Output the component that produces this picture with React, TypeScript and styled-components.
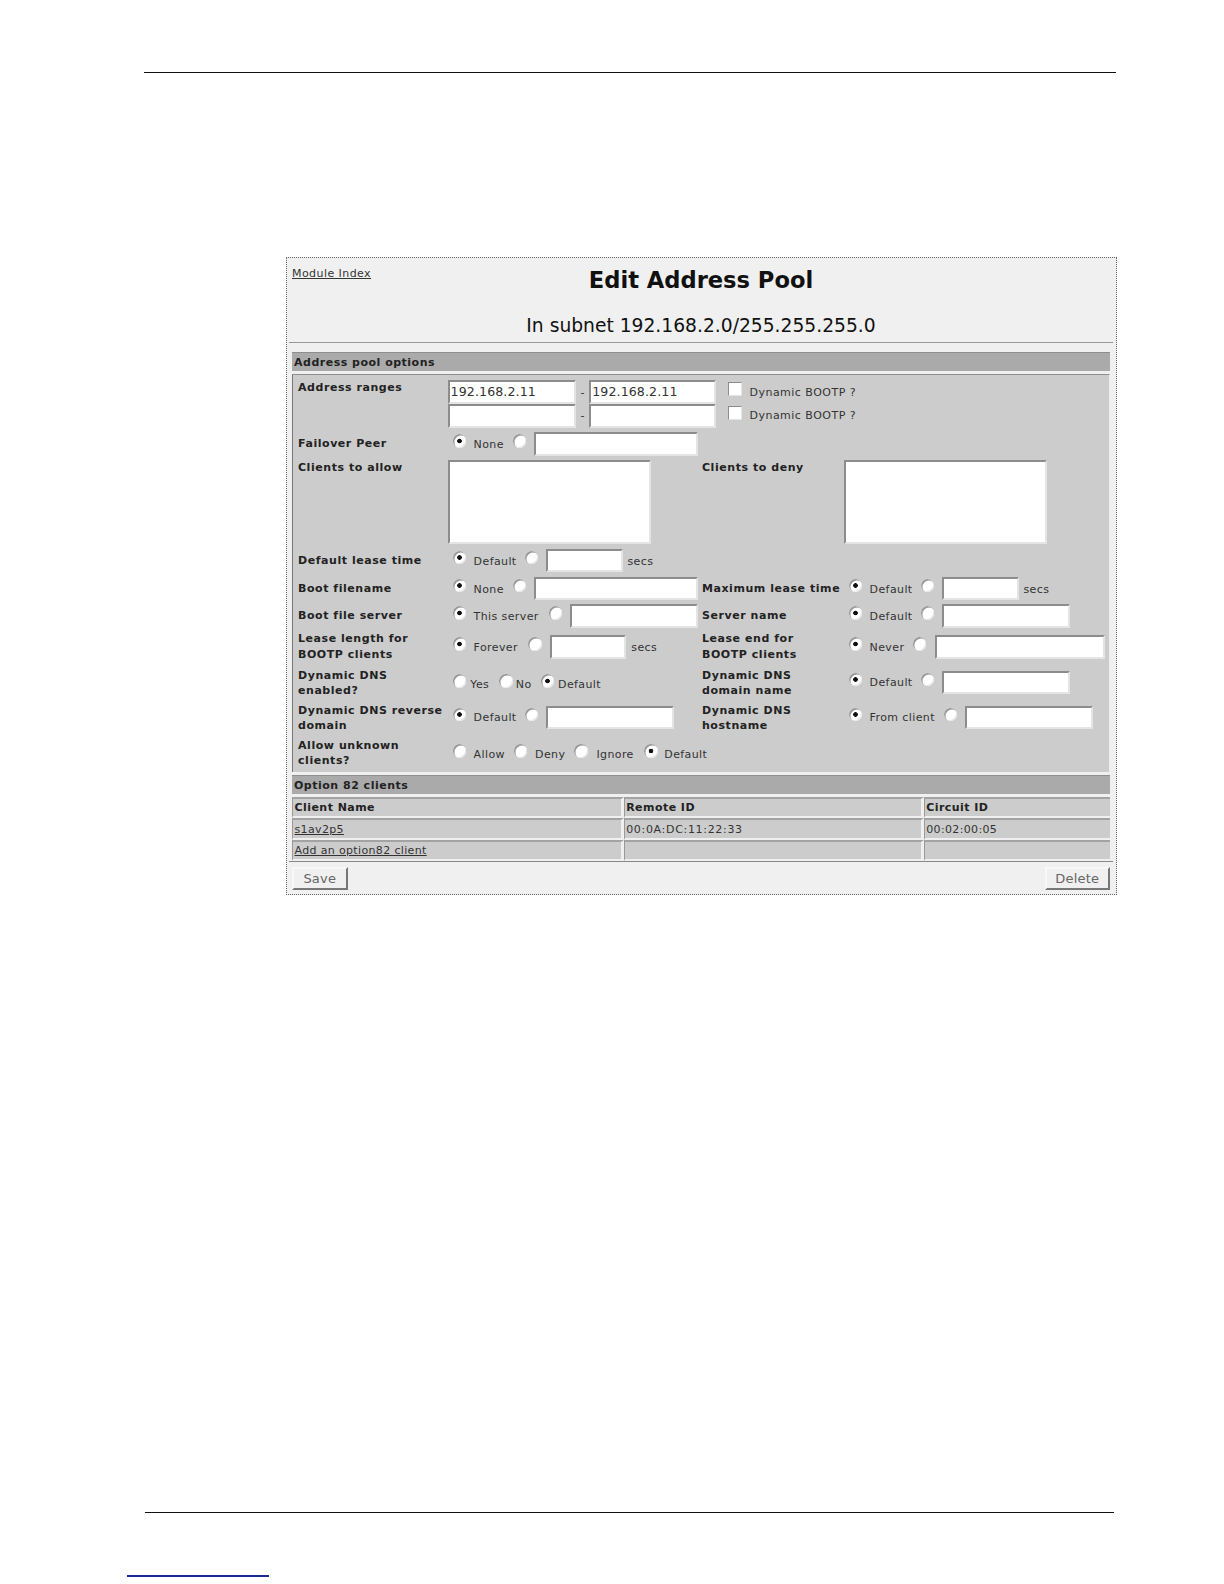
import React from "react";
import styled, { createGlobalStyle } from "styled-components";

const Global = createGlobalStyle`
  html, body { margin: 0; padding: 0; background: #fff; }
  body { font-family: "DejaVu Sans", "Liberation Sans", sans-serif; color: #222; }
`;

const Page = styled.div`
  width: 1224px;
  height: 1584px;
  padding-top: 72px;
  box-sizing: border-box;
  overflow: hidden;
`;
const TopRule = styled.div`
  height: 1px;
  width: 972px;
  margin-left: 144px;
  background: #111;
`;
const Panel = styled.div`
  box-sizing: border-box;
  width: 831px;
  height: 638px;
  margin: 184px 0 0 286px;
  padding: 1px 3px 0 2px;
  border: 1px dotted #666;
  background: #f0f0f0;
`;
const Head = styled.div`
  display: grid;
  grid-template-columns: 1fr auto 1fr;
  height: 55px;
`;
const ModuleLink = styled.a`
  font-size: 11px;
  line-height: 14px;
  margin: 8px 0 0 3px;
  color: #333;
  text-decoration: underline;
  letter-spacing: 0.44px;
`;
const Title = styled.h1`
  margin: 7px 0 0;
  font-size: 22.6px;
  line-height: 28px;
  font-weight: 700;
  color: #111;
`;
const Subtitle = styled.h2`
  margin: 0;
  font-size: 18.7px;
  line-height: 24px;
  font-weight: 400;
  text-align: center;
  color: #111;
`;
const Divider = styled.div`
  height: 1px;
  margin-top: 4px;
  background: #999;
`;
const Content = styled.div`
  width: 818px;
  margin: 9px 0 0 3px;
`;
const SectionBar = styled.div`
  box-sizing: border-box;
  height: 19px;
  padding: 2px 0 0 2px;
  background: #aaa;
  border-top: 1px solid #8e8e8e;
  font-size: 11px;
  line-height: 16px;
  font-weight: 700;
  letter-spacing: 0.5px;
  color: #222;
`;
const ClientsBar = styled(SectionBar)`
  margin: 3px 0 2.5px;
`;
const Options = styled.div`
  box-sizing: border-box;
  height: 398px;
  margin-top: 3px;
  padding: 5.3px 0 0 5px;
  background: #ccc;
  border-top: 1px solid #8e8e8e;
  border-left: 1px solid #777;
  border-right: 1px solid #eee;
`;
const Row = styled.div<{ $h: number; $gap?: number }>`
  display: grid;
  grid-template-columns: 149.6px 254.4px 141.6px 1fr;
  align-items: center;
  height: ${(p) => p.$h}px;
  margin-bottom: ${(p) => p.$gap ?? 5}px;
`;
const TopRow = styled(Row)`
  align-items: start;
`;
const Label = styled.div`
  font-size: 11px;
  line-height: 15.5px;
  font-weight: 700;
  letter-spacing: 0.55px;
  color: #222;
  white-space: nowrap;
`;
const LowLabel = styled(Label)`
  padding-top: 2px;
`;
const Controls = styled.div`
  display: flex;
  align-items: center;
  height: 100%;
  white-space: nowrap;
`;
const LowControls = styled(Controls)`
  padding-top: 3px;
  box-sizing: border-box;
`;
const Stack = styled.div`
  display: flex;
  flex-direction: column;
  grid-column: 2 / 5;
`;
const Line = styled.div`
  display: flex;
  align-items: center;
  height: 23.75px;
`;
const Text = styled.span<{ $l?: number }>`
  font-size: 11px;
  line-height: 14px;
  color: #333;
  letter-spacing: 0.4px;
  margin-left: ${(p) => p.$l ?? 7.5}px;
  position: relative;
  top: 1px;
`;
const Radio = styled.input.attrs({ type: "radio", readOnly: true })<{ $l?: number }>`
  appearance: none;
  box-sizing: border-box;
  flex: none;
  width: 13.5px;
  height: 13.5px;
  margin: 0 0 0 ${(p) => p.$l ?? 5}px;
  position: relative;
  top: -3px;
  border-radius: 50%;
  background: #fff;
  box-shadow: inset 1.5px 1.5px 0 #9a9a9a, inset -1px -1px 0 #e8e8e8;
  &:checked {
    background: radial-gradient(circle at 50% 50%, #111 0 2px, #fff 2.6px);
  }
`;
const Field = styled.input.attrs({ type: "text", readOnly: true })<{ $w: number; $l?: number }>`
  box-sizing: border-box;
  flex: none;
  width: ${(p) => p.$w}px;
  height: 23.5px;
  margin: 0 0 0 ${(p) => p.$l ?? 8}px;
  padding: 0 1px 2px;
  border-style: solid;
  border-width: 2px;
  border-color: #8c8c8c #e4e4e4 #e4e4e4 #8c8c8c;
  background: #fff;
  font: 12.6px "DejaVu Sans", sans-serif;
  letter-spacing: 0.1px;
  color: #333;
`;
const Area = styled.textarea.attrs({ readOnly: true })`
  box-sizing: border-box;
  display: block;
  width: 203px;
  height: 84px;
  margin: 0;
  border-style: solid;
  border-width: 2px;
  border-color: #8c8c8c #e4e4e4 #e4e4e4 #8c8c8c;
  background: #fff;
  resize: none;
`;
const Check = styled.input.attrs({ type: "checkbox", readOnly: true })`
  appearance: none;
  box-sizing: border-box;
  flex: none;
  width: 14px;
  height: 14px;
  margin: 0 0 0 12.3px;
  position: relative;
  top: -3px;
  background: #fff;
  border-style: solid;
  border-width: 1.5px;
  border-color: #8c8c8c #e4e4e4 #e4e4e4 #8c8c8c;
`;
const CheckLabel = styled(Text)`
  letter-spacing: 0.48px;
  top: 0.5px;
`;
const Dash = styled.span`
  width: 13.6px;
  text-align: center;
  font-size: 11px;
  color: #333;
`;
const ClientTable = styled.table`
  width: 818px;
  table-layout: fixed;
  border-collapse: separate;
  border-spacing: 0;
`;
const Cell = styled.td<{ $w?: number }>`
  box-sizing: border-box;
  ${(p) => (p.$w ? `width: ${p.$w}px;` : "")}
  height: 21.5px;
  padding: 2px 0 0 1.5px;
  background: #ccc;
  background-clip: padding-box;
  border-top: 2px solid #a3a3a3;
  border-left: 1px solid #999;
  border-bottom: 2.5px solid #f0f0f0;
  font-size: 11px;
  line-height: 14px;
  letter-spacing: 0.35px;
  color: #333;
  &:not(:last-child) {
    border-right: 3px solid #f0f0f0;
  }
`;
const HeadCell = styled(Cell).attrs({ as: "th" })`
  text-align: left;
  font-weight: 700;
  letter-spacing: 0.45px;
  color: #222;
`;
const CellLink = styled.a`
  color: #333;
  text-decoration: underline;
`;
const WideValue = styled.span`
  letter-spacing: 0.68px;
`;
const TableRule = styled.div`
  height: 1px;
  margin: 0 -3px;
  background: #888;
`;
const Buttons = styled.div`
  display: flex;
  justify-content: space-between;
  margin-top: 4.5px;
`;
const Button = styled.button<{ $w: number }>`
  box-sizing: border-box;
  width: ${(p) => p.$w}px;
  height: 23px;
  padding: 0;
  border-style: solid;
  border-width: 2px;
  border-color: #f8f8f8 #777 #777 #f8f8f8;
  background: #f0f0f0;
  font: 13px "DejaVu Sans", sans-serif;
  color: #666;
  letter-spacing: 0.2px;
`;
const BottomRule = styled.div`
  height: 1px;
  width: 969px;
  margin: 617px 0 0 145px;
  background: #111;
`;
const LinkRule = styled.div`
  height: 1.5px;
  width: 142px;
  margin: 62px 0 0 127px;
  background: #1a2a9c;
`;

export default function App() {
  return (
    <Page>
      <Global />
      <TopRule />
      <Panel>
        <Head>
          <ModuleLink href="#">Module Index</ModuleLink>
          <Title>Edit Address Pool</Title>
          <span />
        </Head>
        <Subtitle>In subnet 192.168.2.0/255.255.255.0</Subtitle>
        <Divider />
        <Content>
          <SectionBar>Address pool options</SectionBar>
          <Options>
            <TopRow $h={47.5} $gap={4.5}>
              <Label>Address ranges</Label>
              <Stack>
                <Line>
                  <Field $w={128} $l={0} defaultValue="192.168.2.11" />
                  <Dash>-</Dash>
                  <Field $w={127} $l={0} defaultValue="192.168.2.11" />
                  <Check />
                  <CheckLabel $l={7}>Dynamic BOOTP ?</CheckLabel>
                </Line>
                <Line>
                  <Field $w={128} $l={0} />
                  <Dash>-</Dash>
                  <Field $w={127} $l={0} />
                  <Check />
                  <CheckLabel $l={7}>Dynamic BOOTP ?</CheckLabel>
                </Line>
              </Stack>
            </TopRow>
            <Row $h={23.5} $gap={4}>
              <Label>Failover Peer</Label>
              <Controls>
                <Radio defaultChecked name="peer" />
                <Text>None</Text>
                <Radio $l={9} name="peer" />
                <Field $w={164} $l={7.5} />
              </Controls>
            </Row>
            <TopRow $h={84}>
              <Label>Clients to allow</Label>
              <Area />
              <Label>Clients to deny</Label>
              <Area />
            </TopRow>
            <Row $h={23}>
              <Label>Default lease time</Label>
              <Controls>
                <Radio defaultChecked name="dl" />
                <Text>Default</Text>
                <Radio $l={8} name="dl" />
                <Field $w={77} />
                <Text $l={4.4}>secs</Text>
              </Controls>
            </Row>
            <Row $h={23} $gap={4.5}>
              <Label>Boot filename</Label>
              <Controls>
                <Radio defaultChecked name="bf" />
                <Text>None</Text>
                <Radio $l={9} name="bf" />
                <Field $w={164} $l={7.5} />
              </Controls>
              <Label>Maximum lease time</Label>
              <Controls>
                <Radio defaultChecked name="ml" />
                <Text>Default</Text>
                <Radio $l={8} name="ml" />
                <Field $w={77} />
                <Text $l={4.4}>secs</Text>
              </Controls>
            </Row>
            <Row $h={23} $gap={4}>
              <Label>Boot file server</Label>
              <Controls>
                <Radio defaultChecked name="bs" />
                <Text>This server</Text>
                <Radio $l={10} name="bs" />
                <Field $w={128} />
              </Controls>
              <Label>Server name</Label>
              <Controls>
                <Radio defaultChecked name="sn" />
                <Text>Default</Text>
                <Radio $l={8} name="sn" />
                <Field $w={128} />
              </Controls>
            </Row>
            <Row $h={28} $gap={6.5}>
              <Label>Lease length for<br />BOOTP clients</Label>
              <Controls>
                <Radio defaultChecked name="ll" />
                <Text>Forever</Text>
                <Radio $l={10.5} name="ll" />
                <Field $w={76} />
                <Text $l={5.4}>secs</Text>
              </Controls>
              <Label>Lease end for<br />BOOTP clients</Label>
              <Controls>
                <Radio defaultChecked name="le" />
                <Text>Never</Text>
                <Radio $l={8.3} name="le" />
                <Field $w={170} $l={9} />
              </Controls>
            </Row>
            <Row $h={30}>
              <LowLabel>Dynamic DNS<br />enabled?</LowLabel>
              <LowControls>
                <Radio name="de" />
                <Text $l={4.2}>Yes</Text>
                <Radio $l={10} name="de" />
                <Text $l={3}>No</Text>
                <Radio $l={9} defaultChecked name="de" />
                <Text $l={4}>Default</Text>
              </LowControls>
              <LowLabel>Dynamic DNS<br />domain name</LowLabel>
              <Controls>
                <Radio defaultChecked name="dd" />
                <Text>Default</Text>
                <Radio $l={8} name="dd" />
                <Field $w={128} />
              </Controls>
            </Row>
            <Row $h={30}>
              <LowLabel>Dynamic DNS reverse<br />domain</LowLabel>
              <Controls>
                <Radio defaultChecked name="dr" />
                <Text>Default</Text>
                <Radio $l={8} name="dr" />
                <Field $w={128} />
              </Controls>
              <LowLabel>Dynamic DNS<br />hostname</LowLabel>
              <Controls>
                <Radio defaultChecked name="dh" />
                <Text>From client</Text>
                <Radio $l={9} name="dh" />
                <Field $w={128} />
              </Controls>
            </Row>
            <Row $h={30} $gap={0}>
              <LowLabel>Allow unknown<br />clients?</LowLabel>
              <LowControls>
                <Radio name="au" />
                <Text>Allow</Text>
                <Radio $l={8.6} name="au" />
                <Text $l={8}>Deny</Text>
                <Radio $l={9} name="au" />
                <Text $l={8.5}>Ignore</Text>
                <Radio $l={10.5} defaultChecked name="au" />
                <Text $l={6.5}>Default</Text>
              </LowControls>
            </Row>
          </Options>
          <ClientsBar>Option 82 clients</ClientsBar>
          <ClientTable>
            <thead>
              <tr>
                <HeadCell $w={331.7}>Client Name</HeadCell>
                <HeadCell $w={300}>Remote ID</HeadCell>
                <HeadCell>Circuit ID</HeadCell>
              </tr>
            </thead>
            <tbody>
              <tr>
                <Cell><CellLink href="#">s1av2p5</CellLink></Cell>
                <Cell><WideValue>00:0A:DC:11:22:33</WideValue></Cell>
                <Cell>00:02:00:05</Cell>
              </tr>
              <tr>
                <Cell><CellLink href="#">Add an option82 client</CellLink></Cell>
                <Cell />
                <Cell />
              </tr>
            </tbody>
          </ClientTable>
          <TableRule />
          <Buttons>
            <Button $w={55.5}>Save</Button>
            <Button $w={65.5}>Delete</Button>
          </Buttons>
        </Content>
      </Panel>
      <BottomRule />
      <LinkRule />
    </Page>
  );
}
